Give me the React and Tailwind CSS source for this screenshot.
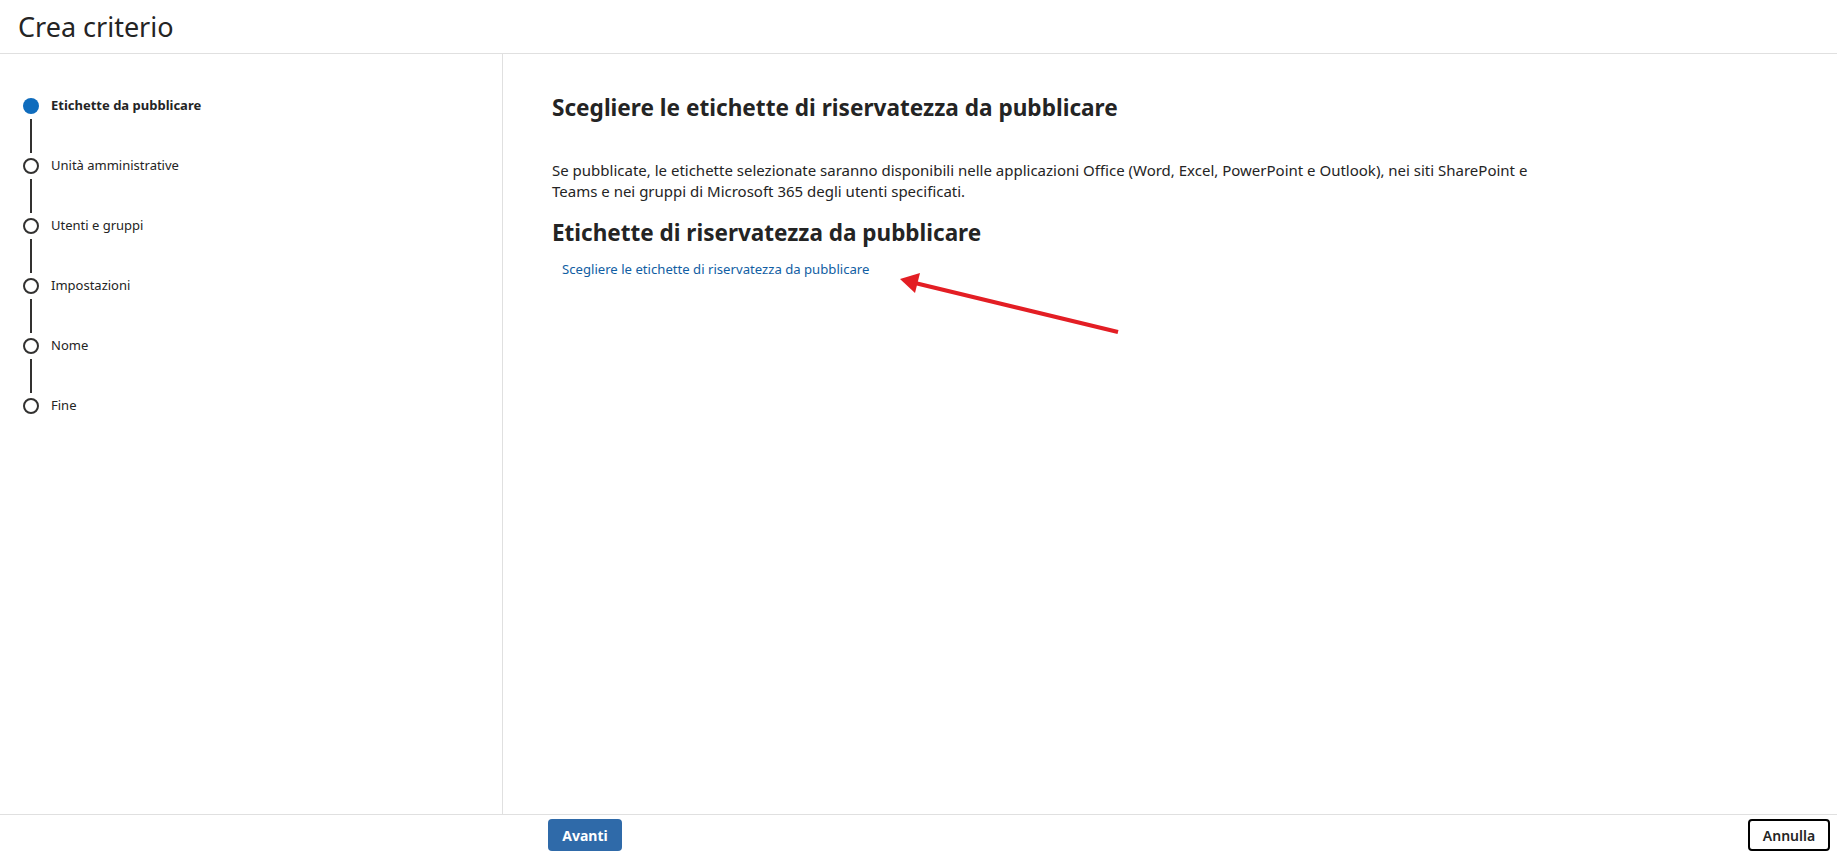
import { Fragment } from "react";

const STEPS = [
  "Etichette da pubblicare",
  "Unità amministrative",
  "Utenti e gruppi",
  "Impostazioni",
  "Nome",
  "Fine",
];

function Stepper({ current = 0 }) {
  return (
    <ol className="flex flex-col">
      {STEPS.map((label, i) => (
        <Fragment key={label}>
          <li className="flex items-center gap-[12px] h-[16px]">
            {i === current ? (
              <span className="h-[16px] w-[16px] shrink-0 rounded-full bg-[#0f6cbd]" />
            ) : (
              <span className="h-[16px] w-[16px] shrink-0 rounded-full border-2 border-[#323130] bg-white" />
            )}
            <span
              className={
                i === current
                  ? "text-[13px] font-bold text-[#242424]"
                  : "text-[13px] text-[#242424]"
              }
            >
              {label}
            </span>
          </li>
          {i < STEPS.length - 1 && (
            <div className="ml-[7px] my-[5px] h-[34px] w-[2px] bg-[#323130]" />
          )}
        </Fragment>
      ))}
    </ol>
  );
}

function Arrow() {
  return (
    <svg
      className="pointer-events-none absolute left-[890px] top-[265px]"
      width="240"
      height="80"
      viewBox="0 0 240 80"
    >
      <line x1="228" y1="67" x2="25" y2="18" stroke="#e31e24" strokeWidth="4" />
      <polygon points="10,14 30,8 25,28" fill="#e31e24" />
    </svg>
  );
}

export default function App() {
  return (
    <div className="relative flex h-[855px] w-full flex-col overflow-hidden bg-white font-['Noto_Sans','Open_Sans',sans-serif] text-[#242424]">
      <header className="flex h-[54px] shrink-0 items-center border-b border-[#e0e0e0] pl-[18px]">
        <h1 className="text-[27px] font-normal leading-none">Crea criterio</h1>
      </header>

      <div className="flex min-h-0 flex-1">
        <aside className="w-[503px] shrink-0 border-r border-[#e0e0e0] pl-[23px] pt-[44px]">
          <Stepper current={0} />
        </aside>

        <main className="flex-1 pl-[49px] pt-[40px]">
          <h2 className="text-[22.6px] font-bold leading-[28px]">
            Scegliere le etichette di riservatezza da pubblicare
          </h2>
          <p className="mt-[38px] max-w-[1000px] text-[15px] leading-[21px]">
            Se pubblicate, le etichette selezionate saranno disponibili nelle applicazioni Office
            (Word, Excel, PowerPoint e Outlook), nei siti SharePoint e Teams e nei gruppi di
            Microsoft 365 degli utenti specificati.
          </p>
          <h3 className="mt-[16px] text-[22.5px] font-bold leading-[30px]">
            Etichette di riservatezza da pubblicare
          </h3>
          <button className="mt-[12px] ml-[10px] text-[13.15px] text-[#115ea3]">
            Scegliere le etichette di riservatezza da pubblicare
          </button>
        </main>
      </div>

      <footer className="flex h-[41px] shrink-0 items-center justify-between border-t border-[#e0e0e0] pl-[548px] pr-[7px]">
        <button className="h-[32px] w-[74px] rounded-[4px] bg-[#2f6aa9] text-[14px] font-bold text-white">
          Avanti
        </button>
        <button className="h-[32px] w-[82px] rounded-[4px] border-2 border-black bg-white text-[14px] font-semibold text-[#242424]">
          Annulla
        </button>
      </footer>

      <Arrow />
    </div>
  );
}
